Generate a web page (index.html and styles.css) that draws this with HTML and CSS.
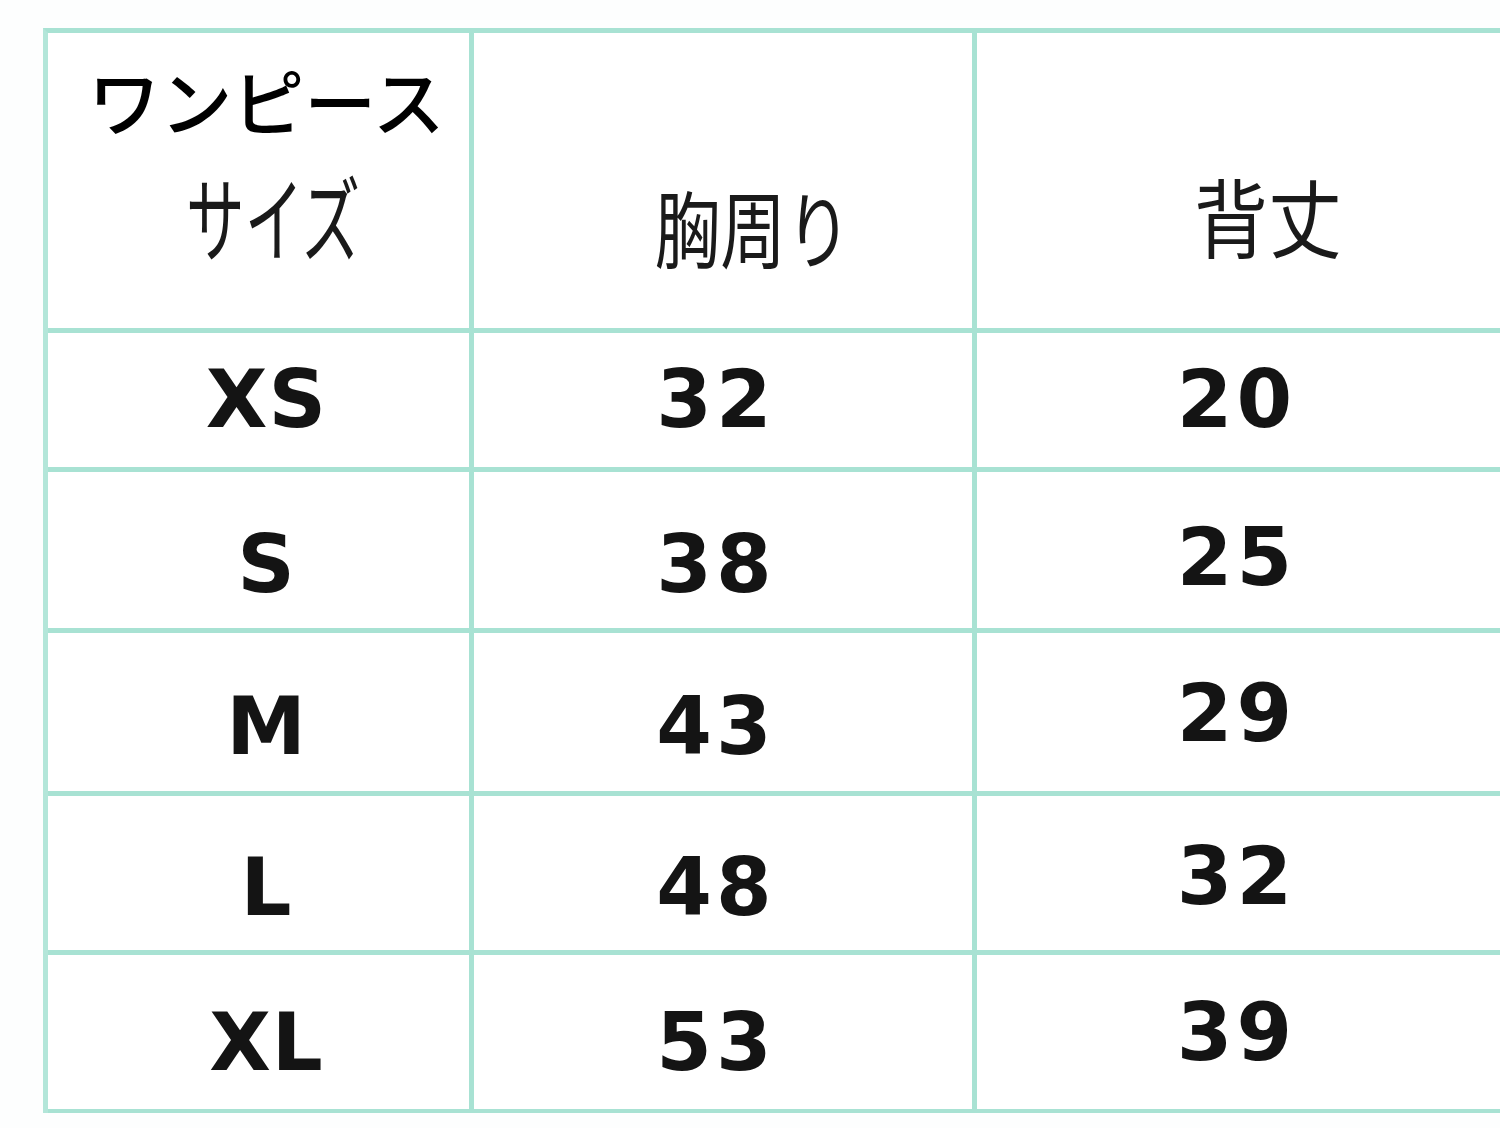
FILE: index.html
```html
<!DOCTYPE html>
<html lang="ja">
<head>
<meta charset="utf-8">
<title>サイズ表</title>
<link rel="stylesheet" href="styles.css">
</head>
<body>
<div class="page">
  <div class="chart">
    <div class="cell head head-size">
      <span class="head-top">ワンピース</span>
      <span class="cond size-label">サイズ</span>
    </div>
    <div class="cell head head-col"><span class="cond chest">胸周り</span></div>
    <div class="cell head head-col head-back"><span class="cond back">背丈</span></div>

    <div class="cell r1 size">XS</div>
    <div class="cell r1 num">32</div>
    <div class="cell r1 num c3">20</div>

    <div class="cell r2 size">S</div>
    <div class="cell r2 num">38</div>
    <div class="cell r2 num c3">25</div>

    <div class="cell r3 size">M</div>
    <div class="cell r3 num">43</div>
    <div class="cell r3 num c3">29</div>

    <div class="cell r4 size">L</div>
    <div class="cell r4 num">48</div>
    <div class="cell r4 num c3">32</div>

    <div class="cell r5 size">XL</div>
    <div class="cell r5 num">53</div>
    <div class="cell r5 num c3">39</div>
  </div>
</div>
</body>
</html>
```

FILE: styles.css
```css
* { box-sizing: border-box; }

html, body {
  margin: 0;
  padding: 0;
  background: #fdfefe;
}

.page {
  width: 1500px;
  height: 1128px;
  overflow: hidden;
  padding: 28px 0 0 43px;
}

.chart {
  display: grid;
  grid-template-columns: 426px 503px 528px;
  grid-template-rows: 300px 139px 161px 163px 159px 158px;
  border-top: 5px solid #a8e2d3;
  border-left: 5px solid #b3e6d9;
  width: 1462px;
}

.cell {
  border-right: 5px solid #a8e2d3;
  border-bottom: 5px solid #a8e2d3;
  background: #ffffff;
  display: flex;
  align-items: center;
  justify-content: center;
  color: #111;
}

.r5 { border-bottom-width: 4px; }

.head {
  font-family: "Noto Sans CJK JP", "Noto Sans", sans-serif;
  font-weight: 400;
  color: #111;
}

.head-size {
  flex-direction: column;
  justify-content: flex-start;
  padding: 30px 0 0 16px;
}

.head-top {
  font-size: 72px;
  line-height: 1;
  letter-spacing: 0;
  font-weight: 500;
  color: #000;
}

.cond {
  display: inline-block;
  font-size: 84px;
  line-height: 1;
  transform: scaleX(0.78);
  color: #1a1a1a;
}

.size-label {
  font-size: 93px;
  transform: scaleX(0.63);
  margin-top: 33px;
  margin-left: 14px;
}

.head-col {
  padding: 90px 0 0 60px;
}

.head-back {
  padding: 68px 0 0 58px;
}

.back {
  font-size: 86px;
  transform: scaleX(0.86);
}

.size, .num {
  font-family: "DejaVu Sans", "Liberation Sans", sans-serif;
  font-weight: 700;
  font-size: 80px;
  line-height: 1;
  color: #141414;
}

.size { padding-left: 16px; letter-spacing: 1px; }

.num { letter-spacing: 4px; padding-right: 14px; }
.num.c3 { padding-right: 4px; }

.r2, .r3, .r4 { padding-top: 30px; }
.r5 { padding-top: 22px; }

.r2.c3 { padding-top: 16px; }
.r3.c3 { padding-top: 4px; }
.r4.c3 { padding-top: 8px; }
.r5.c3 { padding-top: 2px; }
```
